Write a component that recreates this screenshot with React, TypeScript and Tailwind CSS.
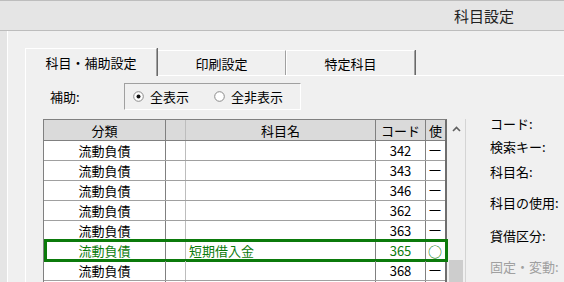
import React from "react";

type Row = {
  category: string;
  name: string;
  code: string;
  usage: string;
  selected?: boolean;
};

const ROWS: Row[] = [
  { category: "流動負債", name: "", code: "342", usage: "一" },
  { category: "流動負債", name: "", code: "343", usage: "一" },
  { category: "流動負債", name: "", code: "346", usage: "一" },
  { category: "流動負債", name: "", code: "362", usage: "一" },
  { category: "流動負債", name: "", code: "363", usage: "一" },
  { category: "流動負債", name: "短期借入金", code: "365", usage: "○", selected: true },
  { category: "流動負債", name: "", code: "368", usage: "一" },
  // partly hidden row under the bottom edge
  { category: "", name: "", code: "", usage: "" },
];

const TABS = ["科目・補助設定", "印刷設定", "特定科目"];

function Radio({ checked }: { checked?: boolean }) {
  return (
    <svg width="11" height="11" viewBox="0 0 11 11" className="shrink-0">
      <circle cx="5.5" cy="5.5" r="4.8" fill="#fff" stroke="#8a8a8a" strokeWidth="1" />
      {checked && <circle cx="5.5" cy="5.5" r="2" fill="#111" />}
    </svg>
  );
}

function Tabs() {
  return (
    <div className="flex items-end h-[28px]">
      {TABS.map((t, i) =>
        i === 0 ? (
          <div
            key={t}
            className="relative z-10 -mb-px w-[132px] h-[28px] flex items-center justify-center bg-[#f0f0f0] border-l border-t border-white border-r border-r-[#a0a0a0] shadow-[1px_0_0_#696969] text-[13px] pt-px"
          >
            {t}
          </div>
        ) : (
          <div
            key={t}
            className="w-[129px] h-[25px] flex items-center justify-center bg-[#f0f0f0] border-l border-t border-white border-r border-r-[#a0a0a0] shadow-[1px_0_0_#696969] text-[13px] pt-px"
          >
            {t}
          </div>
        )
      )}
    </div>
  );
}

function Grid() {
  return (
    <div className="w-[404px] border-l border-t border-r-2 border-[#808080] border-r-[#6e6e6e] bg-white">
      {/* header */}
      <div className="flex h-[21px] bg-[#dadada] border-b border-[#808080] text-[13px] leading-none">
        <div className="w-[122px] border-r border-[#808080] flex items-center justify-center">分類</div>
        <div className="w-[20px] border-r border-[#bdbdbd]" />
        <div className="w-[190px] border-r border-[#808080] flex items-center justify-center">科目名</div>
        <div className="w-[50px] border-r border-[#808080] flex items-center justify-center">コード</div>
        <div className="w-[19px] flex items-center justify-center">使</div>
      </div>

      {/* rows */}
      {ROWS.map((r, i) => (
        <div
          key={i}
          className={`relative flex h-[20px] border-b border-[#a0a0a0] text-[13px] leading-none ${
            r.selected ? "text-[#0b7a0b]" : "text-black"
          }`}
        >
          <div className="w-[122px] border-r border-[#808080] flex items-center justify-center">{r.category}</div>
          <div className="w-[20px] border-r border-[#bdbdbd]" />
          <div className="w-[190px] border-r border-[#808080] flex items-center pl-[3px]">{r.name}</div>
          <div className="w-[50px] border-r border-[#808080] flex items-center justify-center">{r.code}</div>
          <div
            className={`w-[19px] flex items-center justify-center pr-px ${
              r.usage === "○" ? "text-[14px]" : "text-[12px]"
            }`}
          >
            {r.usage}
          </div>
          {r.selected && (
            <div className="absolute -top-[2px] left-0 w-[404px] h-[23px] border-[3px] border-[#0b7a0b] pointer-events-none" />
          )}
        </div>
      ))}
    </div>
  );
}

function Scrollbar() {
  return (
    <div className="w-[19px] bg-[#f0f0f0] border-r border-[#d4d4d4] flex flex-col">
      <div className="h-[20px] flex items-center justify-center">
        <svg width="9" height="6" viewBox="0 0 9 6">
          <polyline points="1,5 4.5,1.5 8,5" fill="none" stroke="#606060" strokeWidth="1.6" />
        </svg>
      </div>
      <div className="h-[121px]" />
      <div className="h-[40px] mx-[2px] bg-[#cdcdcd]" />
    </div>
  );
}

export default function App() {
  const labels = [
    { text: "コード:", mt: "-mt-[2px]" },
    { text: "検索キー:", mt: "mt-[9px]" },
    { text: "科目名:", mt: "mt-[11px]" },
    { text: "科目の使用:", mt: "mt-[17px]" },
    { text: "貸借区分:", mt: "mt-[19px]" },
    { text: "固定・変動:", mt: "mt-[17px]", muted: true },
  ];

  return (
    <div className="w-[564px] h-[282px] overflow-hidden bg-[#e5e5e5] text-black font-['Noto_Sans_CJK_JP',sans-serif] flex flex-col">
      {/* Title bar */}
      <div className="h-[31px] shrink-0 border-t border-b border-[#bdbdbd] flex items-center justify-end pr-[50px] text-[15px] leading-none text-[#222]">
        科目設定
      </div>

      <div className="flex flex-1 min-h-0">
        <div className="w-[7px] shrink-0" />
        <div className="flex-1 bg-[#f0f0f0] border-l border-white pl-[17px] pt-[17px] flex flex-col">
          <Tabs />

          {/* Tab panel */}
          <div className="flex-1 border-l border-t border-white pl-[17px] pt-[7px]">
            <div className="flex items-center h-[27px]">
              <div className="w-[81px] pl-[7px] text-[13px] leading-none">補助:</div>
              <div className="w-[177px] h-[27px] border-l border-t border-[#a0a0a0] border-r border-b border-r-white border-b-white flex items-center pl-[8px] text-[13px] leading-none">
                <Radio checked />
                <span className="ml-[6px]">全表示</span>
                <span className="ml-[25px]">
                  <Radio />
                </span>
                <span className="ml-[6px]">全非表示</span>
              </div>
            </div>

            <div className="flex mt-[9px]">
              <Grid />
              <Scrollbar />
              <div className="ml-[24px] flex flex-col text-[13px]">
                {labels.map((l) => (
                  <div
                    key={l.text}
                    className={`h-[14px] leading-[14px] whitespace-nowrap ${l.mt} ${
                      l.muted ? "text-[#a0a0a0]" : "text-black"
                    }`}
                  >
                    {l.text}
                  </div>
                ))}
              </div>
            </div>
          </div>
        </div>
      </div>
    </div>
  );
}
